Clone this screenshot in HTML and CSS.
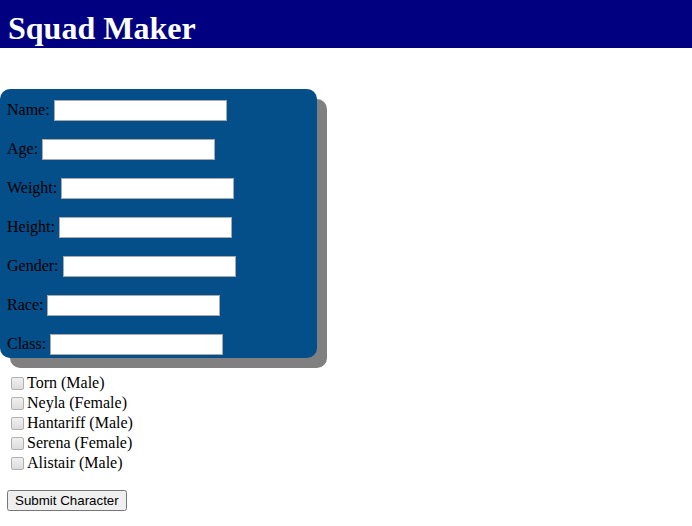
FILE: index.html
```html
<!DOCTYPE html>
<html>
<head>
<meta charset="utf-8">
<title>Squad Maker</title>
<link rel="stylesheet" href="styles.css">
</head>
<body>
<div class="header"><h1 class="title">Squad Maker</h1></div>
<form class="form">
  <div class="panel">
    <div class="row"><label>Name: <input type="text" class="field"></label></div>
    <div class="row"><label>Age: <input type="text" class="field"></label></div>
    <div class="row"><label>Weight: <input type="text" class="field"></label></div>
    <div class="row"><label>Height: <input type="text" class="field"></label></div>
    <div class="row"><label>Gender: <input type="text" class="field"></label></div>
    <div class="row"><label>Race: <input type="text" class="field"></label></div>
    <div class="row"><label>Class: <input type="text" class="field"></label></div>
  </div>
  <div class="squad">
    <label class="member"><input type="checkbox" class="check">Torn (Male)</label>
    <label class="member"><input type="checkbox" class="check">Neyla (Female)</label>
    <label class="member"><input type="checkbox" class="check">Hantariff (Male)</label>
    <label class="member"><input type="checkbox" class="check">Serena (Female)</label>
    <label class="member"><input type="checkbox" class="check">Alistair (Male)</label>
  </div>
  <div class="actions"><button type="button" class="submit">Submit Character</button></div>
</form>
</body>
</html>
```
FILE: styles.css
```css
body {
  margin: 0;
  font-family: "Liberation Serif", "Times New Roman", serif;
  font-size: 16px;
  color: #000;
  background: #fff;
}
.header {
  background: #000080;
  padding: 10px 8px 1px;
}
.title {
  margin: 0;
  color: #fff;
  font-size: 32px;
  font-weight: bold;
  line-height: 37px;
}
.form {
  margin: 0;
}
.panel {
  margin-top: 41px;
  width: 310px;
  padding: 9px 0 3px 7px;
  background: #044e89;
  border-radius: 10px;
  box-shadow: 10px 10px 0 #808080;
  display: flex;
  flex-direction: column;
  gap: 16px;
}
.row {
  height: 23px;
  line-height: 23px;
}
.field {
  box-sizing: border-box;
  width: 173px;
  height: 21px;
  border: 1px solid #a9a9a9;
  background: #fff;
  padding: 1px 2px;
}
.squad {
  margin-top: 15px;
  padding-left: 7px;
  display: flex;
  flex-direction: column;
}
.member {
  display: flex;
  align-items: center;
  height: 20px;
  line-height: 20px;
}
.check {
  appearance: none;
  -webkit-appearance: none;
  box-sizing: border-box;
  width: 13px;
  height: 13px;
  margin: 0 3px 0 4px;
  border: 1px solid #b0b0b0;
  border-radius: 2px;
  background: linear-gradient(#f0f0f0, #dcdcdc);
}
.actions {
  padding: 17px 7px 0;
}
.submit {
  font-family: "Liberation Sans", Arial, sans-serif;
  font-size: 13.333px;
}
```
